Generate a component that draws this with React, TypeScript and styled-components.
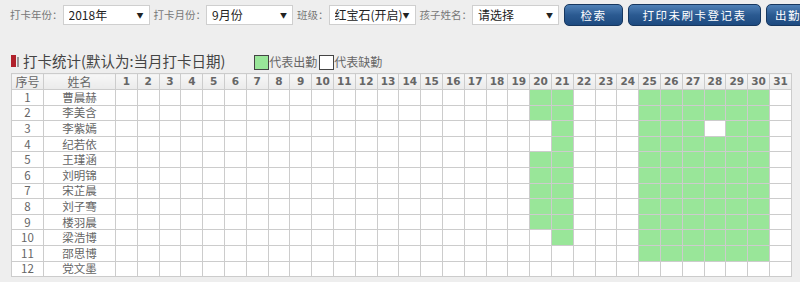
import React from 'react';
import styled, { createGlobalStyle } from 'styled-components';

const GlobalStyle = createGlobalStyle`
    html, body {
        margin: 0;
        padding: 0;
        background: #eeeeee;
        overflow: hidden;
    }
    body {
        font-family: "Noto Sans CJK SC", "Liberation Sans", sans-serif;
    }
`;

const students = ['曹晨赫', '李美含', '李紫嫣', '纪若依', '王瑾涵', '刘明锦', '宋芷晨', '刘子骞', '楼羽晨', '梁浩博', '邵思博', '党文墨'];

const days = Array.from({ length: 31 }, (_, i) => i + 1);

// which days each student showed up
const isPresent = (row: number, day: number) => {
    if (day === 20) return [1, 2, 5, 6, 7, 8, 9].includes(row);
    if (day === 21) return row <= 10;
    if (day >= 25 && day <= 30) {
        if (row === 3 && day === 28) return false;
        return row <= 11;
    }
    return false;
};

interface IFilterProps {
    label: string;
    value: string;
}

const Filter: React.FC<IFilterProps> = ({ label, value }) => (
    <SFilter>
        <SLabel>{label}</SLabel>
        <SSelect>
            <SValue>{value}</SValue>
            <SArrow>▼</SArrow>
        </SSelect>
    </SFilter>
);

const App: React.FC = () => {
    return (
        <SPage>
            <GlobalStyle />
            <SToolbar>
                <Filter label='打卡年份：' value='2018年' />
                <Filter label='打卡月份：' value='9月份' />
                <Filter label='班级：' value='红宝石(开启)' />
                <Filter label='孩子姓名：' value='请选择' />
                <SButton $width={59}>检索</SButton>
                <SButton $width={133}>打印未刷卡登记表</SButton>
                <SButton $width={70}>出勤统计</SButton>
            </SToolbar>

            <STitleRow>
                <STitle>
                    <SMarkRed />
                    <SMarkGrey />
                    打卡统计(默认为:当月打卡日期)
                </STitle>
                <SLegend>
                    <SSwatch $present />
                    代表出勤
                    <SSwatch $present={false} />
                    代表缺勤
                </SLegend>
            </STitleRow>

            <STable>
                <colgroup>
                    <col style={{ width: 32 }} />
                    <col style={{ width: 72 }} />
                    {days.map(d => (
                        <col key={d} />
                    ))}
                </colgroup>
                <thead>
                    <tr>
                        <SHeadCell>序号</SHeadCell>
                        <SHeadCell>姓名</SHeadCell>
                        {days.map(d => (
                            <SHeadCell key={d} $day>
                                {d}
                            </SHeadCell>
                        ))}
                    </tr>
                </thead>
                <tbody>
                    {students.map((name, i) => (
                        <tr key={name}>
                            <SCell>{i + 1}</SCell>
                            <SCell>{name}</SCell>
                            {days.map(d => (
                                <SCell key={d} $present={isPresent(i + 1, d)} />
                            ))}
                        </tr>
                    ))}
                </tbody>
            </STable>
        </SPage>
    );
};

export default App;

const SPage = styled.div`
    width: 800px;
    height: 282px;
    overflow: hidden;
    background: #eeeeee;
`;

const SToolbar = styled.div`
    display: flex;
    align-items: center;
    gap: 4px;
    padding: 3px 0 0 10px;
    height: 23px;
    white-space: nowrap;
`;

const SFilter = styled.div`
    display: flex;
    align-items: center;
`;

const SLabel = styled.span`
    font-size: 10.5px;
    color: #777;
`;

const SSelect = styled.div`
    display: flex;
    align-items: center;
    justify-content: space-between;
    box-sizing: border-box;
    width: 87px;
    height: 20px;
    padding: 0 5px 0 5px;
    background: #fff;
    border: 1px solid #cfcfcf;
    font-size: 12px;
    color: #222;
    overflow: hidden;
`;

const SValue = styled.span`
    overflow: hidden;
`;

const SArrow = styled.span`
    flex-shrink: 0;
    font-size: 7px;
    color: #222;
    margin-left: 1px;
`;

const SButton = styled.button<{ $width: number }>`
    flex-shrink: 0;
    box-sizing: border-box;
    width: ${p => p.$width}px;
    height: 22px;
    margin-left: 1px;
    border: 1px solid #17375f;
    border-radius: 5px;
    background: linear-gradient(#4f80b6, #2b5a91 50%, #1d4a80);
    color: #fff;
    font-family: "Noto Sans CJK SC", sans-serif;
    font-size: 11.5px;
    letter-spacing: 1.5px;
    padding: 0;
`;

const STitleRow = styled.div`
    display: flex;
    align-items: flex-end;
    padding: 25px 0 0 11px;
    height: 20px;
`;

const STitle = styled.div`
    display: flex;
    align-items: center;
    font-size: 14.5px;
    color: #444;
    line-height: 20px;
`;

const SMarkRed = styled.span`
    width: 5px;
    height: 12px;
    background: #b0212b;
    margin-right: 1px;
`;

const SMarkGrey = styled.span`
    width: 2px;
    height: 10px;
    background: #999;
    margin-right: 4px;
    margin-top: 2px;
`;

const SLegend = styled.div`
    display: flex;
    align-items: center;
    margin-left: 27px;
    font-size: 12px;
    color: #666;
    line-height: 18px;
`;

const SSwatch = styled.span<{ $present: boolean }>`
    box-sizing: border-box;
    width: 15px;
    height: 15px;
    margin-left: 2px;
    border: 1px solid #444;
    background: ${p => (p.$present ? '#99e699' : '#fff')};
`;

const STable = styled.table`
    margin: 2px 0 0 11px;
    width: 781px;
    table-layout: fixed;
    border-collapse: collapse;
    background: #fff;
    border: 1px solid #cccccc;
`;

const SHeadCell = styled.th<{ $day?: boolean }>`
    height: 15px;
    padding: 0;
    border: 1px solid #cccccc;
    background: linear-gradient(#f7f7f7, #eaeaea);
    color: #666;
    text-align: center;
    font-family: ${p => (p.$day ? '"DejaVu Sans", sans-serif' : '"Noto Sans CJK SC", sans-serif')};
    font-size: ${p => (p.$day ? '10.5px' : '12px')};
    font-weight: ${p => (p.$day ? 'bold' : 'normal')};
    line-height: 13px;
`;

const SCell = styled.td<{ $present?: boolean }>`
    height: 14.6px;
    padding: 0;
    border: 1px solid #cccccc;
    background: ${p => (p.$present ? '#99e699' : 'transparent')};
    color: #666;
    text-align: center;
    font-size: 11.5px;
    line-height: 13px;
`;
